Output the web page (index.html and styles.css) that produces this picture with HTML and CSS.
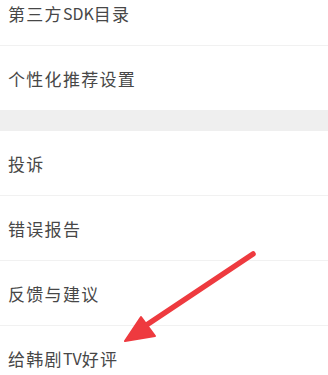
FILE: index.html
```html
<!DOCTYPE html>
<html lang="zh-CN">
<head>
<meta charset="utf-8">
<link rel="stylesheet" href="styles.css">
</head>
<body>
<div class="screen">
  <ul class="list first">
    <li class="row">第三方<span class="latin">SDK</span>目录</li>
    <li class="row">个性化推荐设置</li>
  </ul>
  <div class="gap"></div>
  <ul class="list">
    <li class="row">投诉</li>
    <li class="row">错误报告</li>
    <li class="row">反馈与建议</li>
    <li class="row">给韩剧<span class="latin">TV</span>好评</li>
  </ul>
  <svg class="arrow" width="328" height="375" viewBox="0 0 328 375">
    <line x1="253" y1="254" x2="145" y2="326" stroke="#ee3a3f" stroke-width="5.5" stroke-linecap="round"/>
    <polygon points="125,341 141,317 155,336" fill="#ee3a3f" stroke="#ee3a3f" stroke-width="2" stroke-linejoin="round"/>
  </svg>
</div>
</body>
</html>
```
FILE: styles.css
```css
html, body {
  margin: 0;
  padding: 0;
  background: #ffffff;
}
.screen {
  position: relative;
  width: 328px;
  height: 375px;
  overflow: hidden;
  background: #ffffff;
  font-family: "Noto Sans CJK SC", "Noto Sans", sans-serif;
}
.list {
  list-style: none;
  margin: 0;
  padding: 0;
}
.list.first {
  margin-top: -19px;
}
.row {
  height: 64px;
  display: flex;
  align-items: center;
  padding-left: 8px;
  font-size: 17px;
  letter-spacing: 1.3px;
  color: #474747;
  border-bottom: 1px solid #f1f1f1;
}
.latin {
  letter-spacing: 0;
  font-size: 16px;
}
.list .row:last-child {
  border-bottom: none;
}
.gap {
  height: 21px;
  background: #efefef;
}
.arrow {
  position: absolute;
  left: 0;
  top: 0;
}
```
